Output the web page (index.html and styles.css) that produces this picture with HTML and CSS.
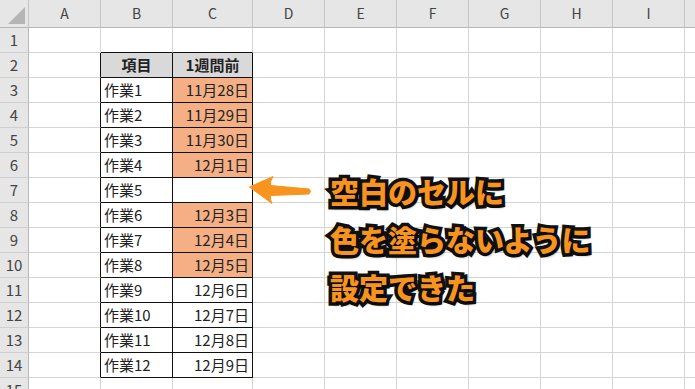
FILE: index.html
```html
<!DOCTYPE html>
<html lang="ja">
<head>
<meta charset="utf-8">
<title>Excel</title>
<link rel="stylesheet" href="styles.css">
</head>
<body>
<div class="sheet">
  <div class="grid">
    <div class="h corner"><span class="tri"></span></div><div class="h">A</div><div class="h">B</div><div class="h">C</div><div class="h">D</div><div class="h">E</div><div class="h">F</div><div class="h">G</div><div class="h">H</div><div class="h">I</div><div class="h"></div>

    <div class="r">1</div><div class="c"></div><div class="c tt"></div><div class="c tt"></div><div class="c"></div><div class="c"></div><div class="c"></div><div class="c"></div><div class="c"></div><div class="c"></div><div class="c"></div>

    <div class="r">2</div><div class="c tl"></div><div class="c t th">項目</div><div class="c t th">1週間前</div><div class="c"></div><div class="c"></div><div class="c"></div><div class="c"></div><div class="c"></div><div class="c"></div><div class="c"></div>

    <div class="r">3</div><div class="c tl"></div><div class="c t">作業1</div><div class="c t d o">11月28日</div><div class="c"></div><div class="c"></div><div class="c"></div><div class="c"></div><div class="c"></div><div class="c"></div><div class="c"></div>

    <div class="r">4</div><div class="c tl"></div><div class="c t">作業2</div><div class="c t d o">11月29日</div><div class="c"></div><div class="c"></div><div class="c"></div><div class="c"></div><div class="c"></div><div class="c"></div><div class="c"></div>

    <div class="r">5</div><div class="c tl"></div><div class="c t">作業3</div><div class="c t d o">11月30日</div><div class="c"></div><div class="c"></div><div class="c"></div><div class="c"></div><div class="c"></div><div class="c"></div><div class="c"></div>

    <div class="r">6</div><div class="c tl"></div><div class="c t">作業4</div><div class="c t d o">12月1日</div><div class="c"></div><div class="c"></div><div class="c"></div><div class="c"></div><div class="c"></div><div class="c"></div><div class="c"></div>

    <div class="r">7</div><div class="c tl"></div><div class="c t">作業5</div><div class="c t d"></div><div class="c"></div><div class="c"></div><div class="c"></div><div class="c"></div><div class="c"></div><div class="c"></div><div class="c"></div>

    <div class="r">8</div><div class="c tl"></div><div class="c t">作業6</div><div class="c t d o">12月3日</div><div class="c"></div><div class="c"></div><div class="c"></div><div class="c"></div><div class="c"></div><div class="c"></div><div class="c"></div>

    <div class="r">9</div><div class="c tl"></div><div class="c t">作業7</div><div class="c t d o">12月4日</div><div class="c"></div><div class="c"></div><div class="c"></div><div class="c"></div><div class="c"></div><div class="c"></div><div class="c"></div>

    <div class="r">10</div><div class="c tl"></div><div class="c t">作業8</div><div class="c t d o">12月5日</div><div class="c"></div><div class="c"></div><div class="c"></div><div class="c"></div><div class="c"></div><div class="c"></div><div class="c"></div>

    <div class="r">11</div><div class="c tl"></div><div class="c t">作業9</div><div class="c t d">12月6日</div><div class="c"></div><div class="c"></div><div class="c"></div><div class="c"></div><div class="c"></div><div class="c"></div><div class="c"></div>

    <div class="r">12</div><div class="c tl"></div><div class="c t">作業10</div><div class="c t d">12月7日</div><div class="c"></div><div class="c"></div><div class="c"></div><div class="c"></div><div class="c"></div><div class="c"></div><div class="c"></div>

    <div class="r">13</div><div class="c tl"></div><div class="c t">作業11</div><div class="c t d">12月8日</div><div class="c"></div><div class="c"></div><div class="c"></div><div class="c"></div><div class="c"></div><div class="c"></div><div class="c"></div>

    <div class="r">14</div><div class="c tl"></div><div class="c t">作業12</div><div class="c t d">12月9日</div><div class="c"></div><div class="c"></div><div class="c"></div><div class="c"></div><div class="c"></div><div class="c"></div><div class="c"></div>

    <div class="r">15</div><div class="c"></div><div class="c"></div><div class="c"></div><div class="c"></div><div class="c"></div><div class="c"></div><div class="c"></div><div class="c"></div><div class="c"></div><div class="c"></div>
  </div>

  <svg class="arrow" width="80" height="40" viewBox="0 0 80 40">
    <path d="M9.5 17 L33 6.5 Q29.5 12 30.5 15.5 L69 19 Q72 21 69 24 L30.5 25.5 Q29.5 29 32 33.5 Z" fill="#f7941f" stroke="#f7941f" stroke-width="1" stroke-linejoin="round"/>
  </svg>

  <div class="callout">
    <p>空白のセルに</p>
    <p>色を塗らないように</p>
    <p>設定できた</p>
  </div>
</div>
</body>
</html>
```

FILE: styles.css
```css
html, body {
  margin: 0;
  padding: 0;
  background: #ffffff;
}

.sheet {
  position: relative;
  width: 695px;
  height: 389px;
  overflow: hidden;
  font-family: "Noto Sans CJK JP", "Noto Sans", sans-serif;
}

.grid {
  display: grid;
  grid-template-columns: 29px 72px 72px 80px 72px 72px 72px 72px 72px 72px 40px;
  grid-template-rows: 28px repeat(15, 25px);
}

.grid > div {
  box-sizing: border-box;
  border-right: 1px solid #d4d4d4;
  border-bottom: 1px solid #d4d4d4;
  overflow: hidden;
  white-space: nowrap;
}

.h {
  background: #e6e6e6;
  border-right-color: #c4c4c4 !important;
  border-bottom-color: #b8b8b8 !important;
  color: #444444;
  font-size: 14px;
  text-align: center;
  line-height: 26px;
}

.corner {
  position: relative;
}

.tri {
  position: absolute;
  right: 3px;
  bottom: 3px;
  width: 0;
  height: 0;
  border-left: 17px solid transparent;
  border-bottom: 17px solid #b5b5b5;
}

.r {
  background: #e6e6e6;
  border-right-color: #b8b8b8 !important;
  border-bottom-color: #cfcfcf !important;
  color: #444444;
  font-size: 15px;
  text-align: center;
  line-height: 24px;
}

.c {
  font-size: 15px;
  line-height: 24px;
  color: #222222;
  padding: 0 3px;
}

.tt {
  border-bottom-color: #111111 !important;
}

.tl {
  border-right-color: #111111 !important;
}

.t {
  border-right-color: #111111 !important;
  border-bottom-color: #111111 !important;
}

.th {
  background: #d9d9d9;
  font-weight: 700;
  text-align: center;
}

.d {
  text-align: right;
}

.o {
  background: #f4b084;
}

.arrow {
  position: absolute;
  left: 240px;
  top: 170px;
}

.callout {
  position: absolute;
  left: 330px;
  top: 167px;
  font-family: "Noto Sans CJK JP", sans-serif;
  font-weight: 900;
  font-size: 29px;
  line-height: 48px;
  color: #f7941f;
  -webkit-text-stroke: 7px #111111;
  paint-order: stroke fill;
  text-shadow: 2px 3px 3px rgba(0, 0, 0, 0.45);
}

.callout p {
  margin: 0;
  white-space: nowrap;
}
```
